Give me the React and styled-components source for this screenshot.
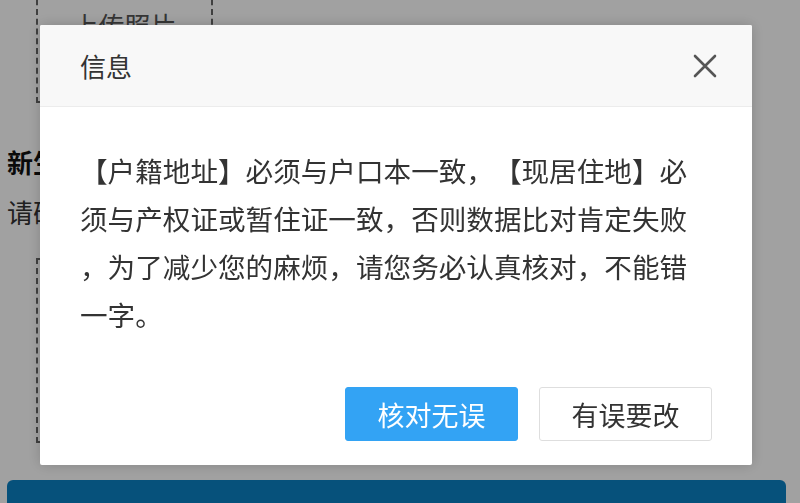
import React from "react";
import styled, { createGlobalStyle } from "styled-components";

const GlobalStyle = createGlobalStyle`
  html, body {
    margin: 0;
    padding: 0;
    background: #ffffff;
    overflow: hidden;
  }
  body {
    font-family: "Noto Sans CJK SC", "Noto Sans", sans-serif;
    color: #222;
    text-spacing-trim: space-all;
  }
`;

const Page = styled.div`
  width: 800px;
  height: 503px;
  padding: 0 14px 0 7px;
  box-sizing: border-box;
  overflow: hidden;
`;

const UploadBox = styled.div`
  width: 177px;
  height: 143px;
  margin: -40px 0 0 29px;
  border: 2px dashed #666;
  border-top: none;
  box-sizing: border-box;
  display: flex;
  align-items: flex-end;
  justify-content: center;
  padding-bottom: 58px;
  font-size: 26px;
  color: #555;
`;

const SectionTitle = styled.div`
  margin-top: 43px;
  font-size: 26px;
  font-weight: 700;
  line-height: 32px;
  color: #111;
`;

const SectionHint = styled.div`
  margin-top: 18px;
  font-size: 26px;
  line-height: 32px;
  color: #333;
`;

const PhotoBox = styled.div`
  width: 300px;
  height: 185px;
  margin: 30px 0 0 29px;
  border: 2px dashed #666;
  box-sizing: border-box;
`;

const SubmitBar = styled.div`
  margin-top: 37px;
  height: 60px;
  border-radius: 6px;
  background: #0b80c3;
`;

const Overlay = styled.div`
  position: fixed;
  inset: 0;
  background: rgba(0, 0, 0, 0.37);
`;

const Dialog = styled.div`
  position: fixed;
  left: 40px;
  top: 25px;
  width: 712px;
  height: 440px;
  background: #fff;
  border-radius: 2px;
  box-shadow: 0 0 14px rgba(0, 0, 0, 0.18);
  display: flex;
  flex-direction: column;
  overflow: hidden;
`;

const Header = styled.div`
  height: 82px;
  flex-shrink: 0;
  box-sizing: border-box;
  padding: 0 32px 0 40px;
  background: #f8f8f8;
  border-bottom: 1px solid #ececec;
  display: flex;
  align-items: center;
  justify-content: space-between;
`;

const Title = styled.div`
  font-size: 26px;
  color: #333;
  line-height: 1;
`;

const CloseButton = styled.button`
  width: 30px;
  height: 30px;
  padding: 0;
  border: none;
  background: transparent;
  display: flex;
  align-items: center;
  justify-content: center;
  cursor: pointer;
`;

const Body = styled.div`
  padding: 39px 40px 0;
  font-size: 27.6px;
  line-height: 48px;
  color: #333;
`;

const Line = styled.div`
  white-space: nowrap;
`;

const Footer = styled.div`
  margin-top: auto;
  padding: 0 40px 24px;
  display: flex;
  justify-content: flex-end;
  gap: 21px;
`;

const Button = styled.button`
  width: 173px;
  height: 54px;
  box-sizing: border-box;
  border-radius: 3px;
  font-family: "Noto Sans CJK SC", "Noto Sans", sans-serif;
  font-size: 27px;
  cursor: pointer;
  border: 1px solid ${({ primary }) => (primary ? "#33a3f4" : "#dedede")};
  background: ${({ primary }) => (primary ? "#33a3f4" : "#fff")};
  color: ${({ primary }) => (primary ? "#fff" : "#333")};
`;

const lines = [
  "【户籍地址】必须与户口本一致，【现居住地】必",
  "须与产权证或暂住证一致，否则数据比对肯定失败",
  "，为了减少您的麻烦，请您务必认真核对，不能错",
  "一字。",
];

export default function App() {
  return (
    <>
      <GlobalStyle />
      <Page>
        <UploadBox>上传照片</UploadBox>
        <SectionTitle>新生儿照片</SectionTitle>
        <SectionHint>请确认照片清晰</SectionHint>
        <PhotoBox />
        <SubmitBar />
      </Page>
      <Overlay />
      <Dialog>
        <Header>
          <Title>信息</Title>
          <CloseButton aria-label="关闭">
            <svg width="24" height="24" viewBox="0 0 24 24">
              <path
                d="M2 2 L22 22 M22 2 L2 22"
                stroke="#555"
                strokeWidth="2.6"
                strokeLinecap="round"
              />
            </svg>
          </CloseButton>
        </Header>
        <Body>
          {lines.map((l, i) => (
            <Line key={i}>{l}</Line>
          ))}
        </Body>
        <Footer>
          <Button primary>核对无误</Button>
          <Button>有误要改</Button>
        </Footer>
      </Dialog>
    </>
  );
}
